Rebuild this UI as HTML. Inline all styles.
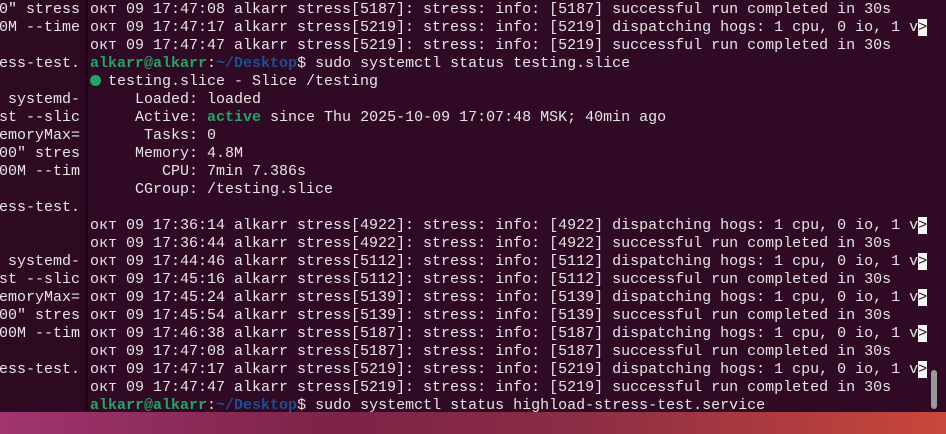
<!DOCTYPE html><html><head><meta charset="utf-8"><style>
html,body{margin:0;padding:0;width:946px;height:434px;overflow:hidden;background:linear-gradient(90deg,#a0356f 0%,#7d2347 35%,#8a2c45 60%,#c9473a 100%);}
.t{position:absolute;font-family:"Liberation Mono",monospace;font-size:15px;line-height:18px;color:#e8e4e6;white-space:pre;margin-top:2px}
#left{position:absolute;left:0;top:0;width:85px;height:412px;background:#2e0a22;overflow:hidden}
#left .t{right:5px;text-align:right}
#sep{position:absolute;left:85px;top:0;width:3px;height:412px;background:#1c0514}
#main{position:absolute;left:88px;top:0;width:858px;height:412px;background:#300a24;overflow:hidden}
#main .t{left:2px}
.g{color:#26a269;font-weight:bold}.b{color:#1d4e93;font-weight:bold}
.a{color:#26a269;font-weight:bold}
.c{background:#f5f5f5;color:#300a24}
.dot{display:inline-block;width:11px;height:11px;border-radius:50%;background:#26a269;vertical-align:-1px;margin-right:7px}
#sb{position:absolute;left:931px;top:370px;width:6px;height:39px;border-radius:3px;background:#9a9a9a}
</style></head><body>
<div id="left">
<div class="t" style="top:-1px">0" stress</div>
<div class="t" style="top:17px">0M --time</div>
<div class="t" style="top:53px">ess-test.</div>
<div class="t" style="top:89px"> systemd-</div>
<div class="t" style="top:107px">st --slic</div>
<div class="t" style="top:125px">emoryMax=</div>
<div class="t" style="top:143px">00" stres</div>
<div class="t" style="top:161px">00M --tim</div>
<div class="t" style="top:197px">ess-test.</div>
<div class="t" style="top:251px"> systemd-</div>
<div class="t" style="top:269px">st --slic</div>
<div class="t" style="top:287px">emoryMax=</div>
<div class="t" style="top:305px">00" stres</div>
<div class="t" style="top:323px">00M --tim</div>
<div class="t" style="top:359px">ess-test.</div>
</div>
<div id="sep"></div>
<div id="main">
<div class="t" style="top:-1px">окт 09 17:47:08 alkarr stress[5187]: stress: info: [5187] successful run completed in 30s</div>
<div class="t" style="top:17px">окт 09 17:47:17 alkarr stress[5219]: stress: info: [5219] dispatching hogs: 1 cpu, 0 io, 1 v<span class="c">&gt;</span></div>
<div class="t" style="top:35px">окт 09 17:47:47 alkarr stress[5219]: stress: info: [5219] successful run completed in 30s</div>
<div class="t" style="top:53px"><span class="g">alkarr@alkarr</span>:<span class="b">~/Desktop</span>$ sudo systemctl status testing.slice</div>
<div class="t" style="top:71px"><span class="dot"></span>testing.slice - Slice /testing</div>
<div class="t" style="top:89px">     Loaded: loaded</div>
<div class="t" style="top:107px">     Active: <span class="a">active</span> since Thu 2025-10-09 17:07:48 MSK; 40min ago</div>
<div class="t" style="top:125px">      Tasks: 0</div>
<div class="t" style="top:143px">     Memory: 4.8M</div>
<div class="t" style="top:161px">        CPU: 7min 7.386s</div>
<div class="t" style="top:179px">     CGroup: /testing.slice</div>
<div class="t" style="top:215px">окт 09 17:36:14 alkarr stress[4922]: stress: info: [4922] dispatching hogs: 1 cpu, 0 io, 1 v<span class="c">&gt;</span></div>
<div class="t" style="top:233px">окт 09 17:36:44 alkarr stress[4922]: stress: info: [4922] successful run completed in 30s</div>
<div class="t" style="top:251px">окт 09 17:44:46 alkarr stress[5112]: stress: info: [5112] dispatching hogs: 1 cpu, 0 io, 1 v<span class="c">&gt;</span></div>
<div class="t" style="top:269px">окт 09 17:45:16 alkarr stress[5112]: stress: info: [5112] successful run completed in 30s</div>
<div class="t" style="top:287px">окт 09 17:45:24 alkarr stress[5139]: stress: info: [5139] dispatching hogs: 1 cpu, 0 io, 1 v<span class="c">&gt;</span></div>
<div class="t" style="top:305px">окт 09 17:45:54 alkarr stress[5139]: stress: info: [5139] successful run completed in 30s</div>
<div class="t" style="top:323px">окт 09 17:46:38 alkarr stress[5187]: stress: info: [5187] dispatching hogs: 1 cpu, 0 io, 1 v<span class="c">&gt;</span></div>
<div class="t" style="top:341px">окт 09 17:47:08 alkarr stress[5187]: stress: info: [5187] successful run completed in 30s</div>
<div class="t" style="top:359px">окт 09 17:47:17 alkarr stress[5219]: stress: info: [5219] dispatching hogs: 1 cpu, 0 io, 1 v<span class="c">&gt;</span></div>
<div class="t" style="top:377px">окт 09 17:47:47 alkarr stress[5219]: stress: info: [5219] successful run completed in 30s</div>
<div class="t" style="top:395px"><span class="g">alkarr@alkarr</span>:<span class="b">~/Desktop</span>$ sudo systemctl status highload-stress-test.service</div>
</div>
<div id="sb"></div>
</body></html>
